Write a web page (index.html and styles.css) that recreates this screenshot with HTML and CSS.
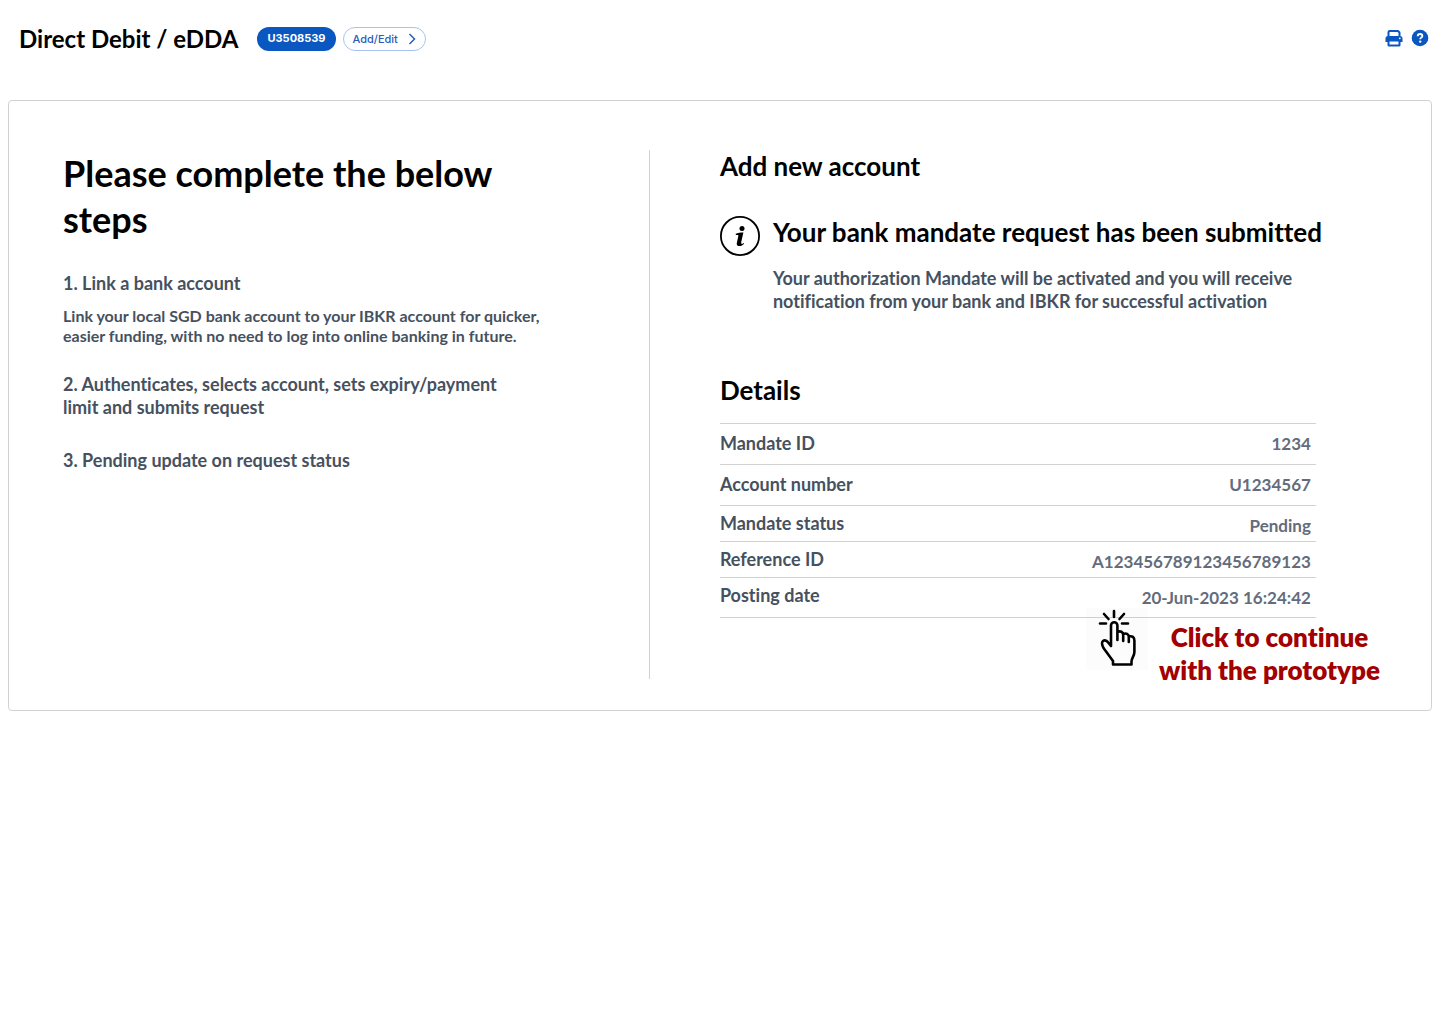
FILE: index.html
```html
<!DOCTYPE html>
<html lang="en">
<head>
  <meta charset="utf-8">
  <meta name="viewport" content="width=device-width, initial-scale=1">
  <title>Direct Debit / eDDA</title>
  <link rel="stylesheet" href="styles.css">
</head>
<body>
  <header class="topbar">
    <h1 class="page-title">Direct Debit / eDDA</h1>
    <button class="pill pill-solid" type="button">U3508539</button>
    <button class="pill pill-outline" type="button">Add/Edit
      <svg class="chevron" viewBox="0 0 8 12" aria-hidden="true"><path d="M1.500 1l5 5-5 5"/></svg>
    </button>
    <div class="tools">
      <button class="icon-button" type="button" aria-label="Print">
        <svg viewBox="0 0 18 18" width="18" height="18" aria-hidden="true">
          <path d="M3.500 7V3.200Q3.500 2 4.700 2h8.300l1.500 1.500V7" fill="none" stroke="#0a57c2" stroke-width="2" stroke-linejoin="round"/>
          <path d="M3 7h12a2.500 2.500 0 0 1 2.500 2.500V13h-3v-2h-11v2h-3V9.500A2.500 2.500 0 0 1 3 7z" fill="#0a57c2"/>
          <rect x="3.500" y="11.500" width="11" height="5" rx="0.500" fill="#fff" stroke="#0a57c2" stroke-width="2"/>
          <circle cx="14.800" cy="9.300" r="0.900" fill="#fff"/>
        </svg>
      </button>
      <button class="icon-button" type="button" aria-label="Help">
        <svg viewBox="0 0 18 18" width="18" height="18" aria-hidden="true">
          <circle cx="9" cy="9" r="8.300" fill="#0a57c2"/>
          <path d="M6.700 7.200c0-1.400 1-2.200 2.400-2.200s2.300.8 2.300 2c0 1.600-2.200 1.500-2.200 3.200" fill="none" stroke="#fff" stroke-width="1.800"/>
          <circle cx="9.200" cy="12.600" r="1.200" fill="#fff"/>
        </svg>
      </button>
    </div>
  </header>

  <main class="card">
    <section class="steps">
      <h2 class="steps-title">Please complete the below steps</h2>
      <h3 class="step">1. Link a bank account</h3>
      <p class="step-note">Link your local SGD bank account to your IBKR account for quicker, easier funding, with no need to log into online banking in future.</p>
      <h3 class="step">2. Authenticates, selects account, sets expiry/payment limit and submits request</h3>
      <h3 class="step">3. Pending update on request status</h3>
    </section>

    <section class="account">
      <h2 class="heading">Add new account</h2>
      <div class="notice">
        <svg class="info" viewBox="0 0 40 40" aria-hidden="true">
          <circle cx="20" cy="20" r="19.100" fill="none" stroke="#000" stroke-width="1.800"/>
          <circle cx="22" cy="12.500" r="2.500"/>
          <path d="M15.800 17.800c2-.8 4.600-1.200 7.600-1.200l-2.100 9.200c-.3 1.400-.1 2 .6 2 .6 0 1.100-.3 1.700-.9l.6.6c-1.100 1.500-2.600 2.600-4.700 2.600-2.200 0-3.100-1.200-2.700-3.200l1.500-6.700c.2-.9 0-1.300-.8-1.300h-1.700z"/>
        </svg>
        <div class="notice-body">
          <h2 class="heading">Your bank mandate request has been submitted</h2>
          <p class="notice-text">Your authorization Mandate will be activated and you will receive notification from your bank and IBKR for successful activation</p>
        </div>
      </div>
      <h2 class="heading">Details</h2>
      <table class="details">
        <tbody>
          <tr class="tall"><th scope="row">Mandate ID</th><td>1234</td></tr>
          <tr class="tall"><th scope="row">Account number</th><td>U1234567</td></tr>
          <tr><th scope="row">Mandate status</th><td>Pending</td></tr>
          <tr><th scope="row">Reference ID</th><td>A123456789123456789123</td></tr>
          <tr class="last"><th scope="row">Posting date</th><td>20-Jun-2023 16:24:42</td></tr>
        </tbody>
      </table>
      <button class="continue" type="button">
        <svg class="hand" viewBox="0 0 62 62" aria-hidden="true">
          <g fill="none" stroke="#000" stroke-width="2.600" stroke-linecap="round" stroke-linejoin="round">
            <path d="M28 3v6M18 6l4.500 5M38 6l-4.500 5M14 15.500h6M36 15.500h6"/>
            <path d="M25 38V17.500a3.200 3.200 0 0 1 6.400 0V32M31.400 24c3-1.500 5.800-.2 5.800 3v6M37.200 26c3-1.200 5.600 0 5.600 3v5M42.800 28.500c3.400-1 5.600.6 5.600 4V44c0 4-2.900 6-2.900 9.500V56.500H27V53L17.500 40c-1.500-3-2.500-5.500-.5-7s4.500 0 5.500 2l2.500 3"/>
          </g>
        </svg>
        <span class="continue-text">Click to continue<br>with the prototype</span>
      </button>
    </section>
  </main>
</body>
</html>
```

FILE: styles.css
```css
* {
  box-sizing: border-box;
}

body {
  margin: 0;
  padding: 20px 8px;
  background: #fff;
  color: #000;
  font-family: Lato, "Liberation Sans", sans-serif;
  font-weight: 700;
  font-variant-ligatures: none;
}

h1, h2, h3, p {
  margin: 0;
  font-weight: 700;
}

button {
  margin: 0;
  padding: 0;
  border: 0;
  background: none;
  font: inherit;
  cursor: pointer;
}

.topbar {
  display: flex;
  align-items: center;
  height: 38px;
  margin-bottom: 42px;
  padding: 0 3px 0 11px;
}

.page-title {
  margin-right: 19px;
  font-size: 24px;
  line-height: 30px;
}

.pill {
  display: flex;
  align-items: center;
  height: 24px;
  border-radius: 12px;
  font-family: Inter, "Liberation Sans", sans-serif;
  font-size: 11px;
  line-height: 20px;
}

.pill-solid {
  margin-right: 7px;
  padding: 0 10px 2px;
  background: #0a57c2;
  color: #fff;
}

.pill-outline {
  gap: 10px;
  padding: 0 9px;
  border: 1px solid #a9c4ec;
  color: #2c5cbb;
  font-weight: 500;
}

.chevron {
  width: 8px;
  height: 12px;
  fill: none;
  stroke: #2c5cbb;
  stroke-width: 1.5;
}

.tools {
  display: flex;
  gap: 8px;
  margin-left: auto;
  padding-bottom: 2px;
}

.icon-button svg {
  display: block;
}

.card {
  display: grid;
  grid-template-columns: 9fr 11fr;
  padding: 49px 0 31px;
  border: 1px solid #d2d2d2;
  border-radius: 4px;
}

.steps {
  padding: 0 96px 0 54px;
  color: #465160;
}

.steps-title {
  margin-bottom: 30px;
  color: #000;
  font-size: 36px;
  line-height: 46px;
}

.step {
  max-width: 450px;
  margin-bottom: 30px;
  font-size: 18px;
  line-height: 23px;
}

.step:first-of-type {
  margin-bottom: 11px;
}

.step-note {
  margin-bottom: 27px;
  font-size: 16px;
  line-height: 20px;
}

.account {
  padding: 0 51px 0 70px;
  border-left: 1px solid #d2d2d2;
}

.heading {
  font-size: 26px;
  line-height: 33px;
}

.notice {
  display: flex;
  gap: 13px;
  margin: 33px 0 61px;
}

.info {
  flex: none;
  width: 40px;
  height: 40px;
}

.notice-text {
  max-width: 540px;
  margin-top: 18px;
  color: #465160;
  font-size: 18px;
  line-height: 23px;
}

.details {
  width: 100%;
  max-width: 596px;
  margin-top: 16px;
  border-collapse: collapse;
}

.details tr {
  height: 36px;
  border: solid #d2d2d2;
  border-width: 1px 0;
}

.details .tall {
  height: 41px;
}

.details .last {
  height: 40px;
}

.details th,
.details td {
  padding: 6px 0 0;
  color: #465160;
  font-size: 18px;
  font-weight: 700;
  line-height: 23px;
  text-align: left;
  vertical-align: top;
}

.details .tall th {
  padding-top: 8px;
}

.details td {
  padding: 8px 5px 0 0;
  color: #646c7b;
  font-size: 17px;
  text-align: right;
}

.continue {
  display: flex;
  align-items: flex-end;
  gap: 11px;
  margin: -10px 0 -8px auto;
  color: #a30000;
}

.hand {
  width: 62px;
  height: 62px;
  margin-bottom: 17px;
  background: rgba(0, 0, 0, 0.01);
}

.continue-text {
  font-size: 26px;
  font-weight: 800;
  line-height: 33px;
  text-align: center;
}
```
